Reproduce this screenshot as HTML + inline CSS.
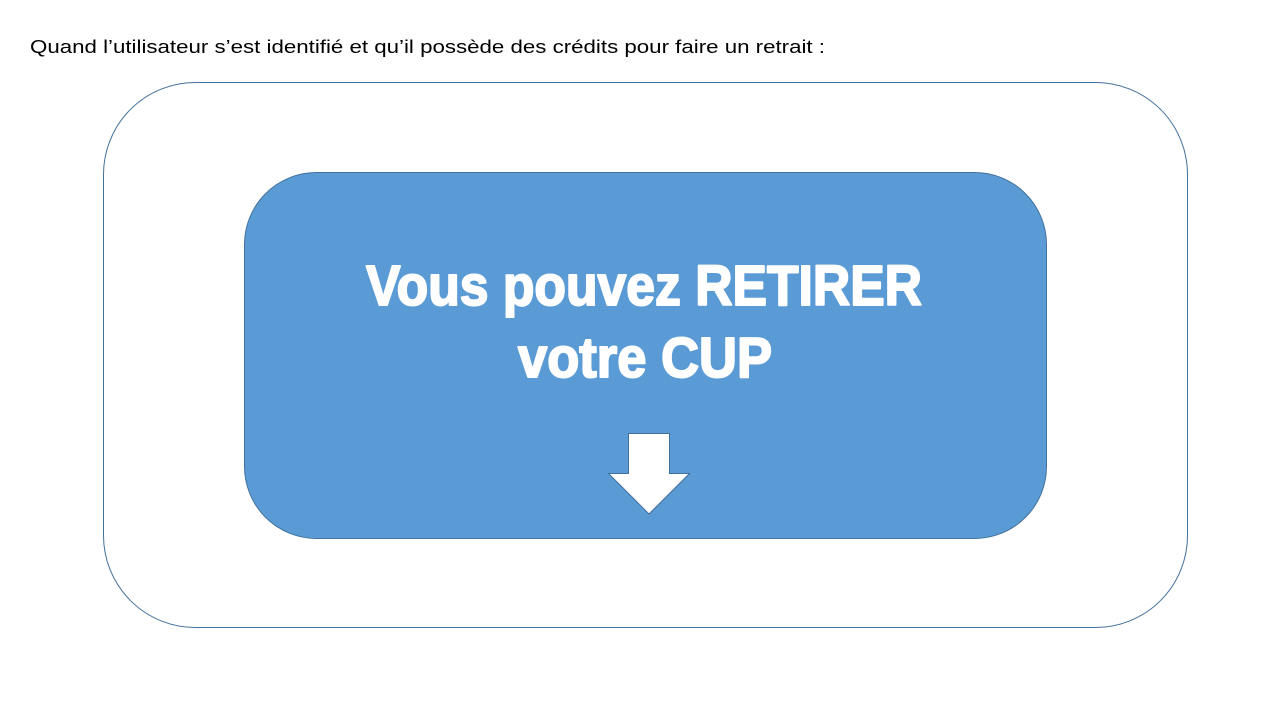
<!DOCTYPE html>
<html><head><meta charset="utf-8"><style>html,body{margin:0;padding:0;background:#fff;width:1280px;height:720px;overflow:hidden}</style></head>
<body>
<svg width="1280" height="720" xmlns="http://www.w3.org/2000/svg">
<text x="30" y="53" font-family="Liberation Sans, sans-serif" font-size="18" fill="#000" textLength="795" lengthAdjust="spacingAndGlyphs">Quand l’utilisateur s’est identifié et qu’il possède des crédits pour faire un retrait :</text>
<rect x="103.5" y="82.5" width="1084" height="545" rx="92" ry="92" fill="#fff" stroke="#41719C" stroke-width="1"/>
<rect x="244.5" y="172.5" width="802" height="366" rx="72" ry="72" fill="#5B9BD5" stroke="#41719C" stroke-width="1"/>
<g stroke="#fff" stroke-width="2" stroke-linejoin="round">
<text x="366" y="305" font-family="Liberation Sans Narrow, Liberation Sans, sans-serif" font-weight="bold" font-size="57" fill="#fff" textLength="556" lengthAdjust="spacingAndGlyphs">Vous pouvez RETIRER</text>
<text x="518" y="377" font-family="Liberation Sans Narrow, Liberation Sans, sans-serif" font-weight="bold" font-size="57" fill="#fff" textLength="254" lengthAdjust="spacingAndGlyphs">votre CUP</text>
</g>
<path d="M628.5 433.5 H669.5 V473.5 H689.5 L649 514 L608.5 473.5 H628.5 Z" fill="#fff" stroke="#41719C" stroke-width="1"/>
</svg>
</body></html>
